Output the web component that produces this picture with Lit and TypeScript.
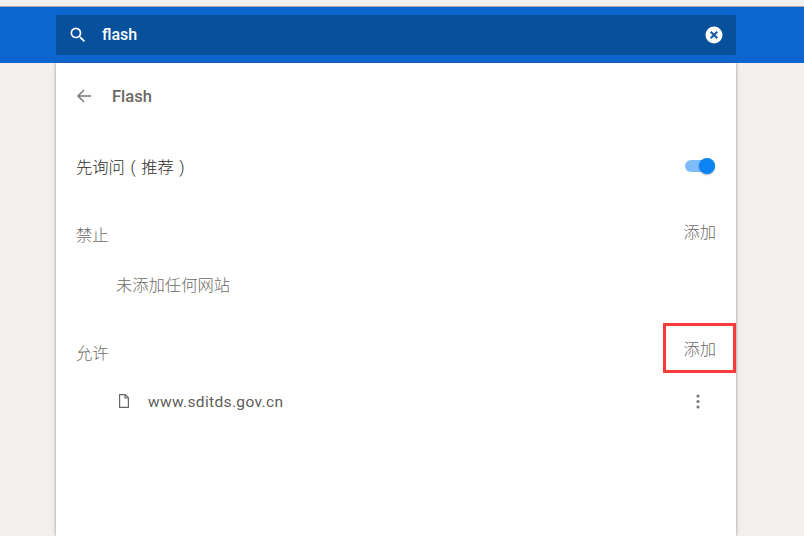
import { LitElement, html, css } from "lit";
import { customElement } from "lit/decorators.js";

@customElement("app-root")
export class AppRoot extends LitElement {
  static styles = css`
    :host {
      display: block;
      height: 536px;
      overflow: hidden;
      position: relative;
      background: #f1f0ee;
      font-family: Roboto, "Noto Sans CJK SC", sans-serif;
      color: #6d6b66;
      font-size: 16.3px;
      font-weight: 300;
    }
    .strip {
      height: 6px;
      border-bottom: 1px solid #a9a7a3;
    }
    .bar {
      height: 56px;
      background: #0d66d0;
      padding: 8px 68px 0 56px;
      box-sizing: border-box;
    }
    .search {
      height: 40px;
      background: #07509c;
      border-radius: 2px;
      display: flex;
      align-items: center;
      padding: 0 12px;
      color: #fff;
    }
    .search .q {
      flex: 1;
      margin: 0 0 2px 14px;
      font-size: 16px;
      font-weight: 500;
    }
    .card {
      margin: 0 68px 0 56px;
      height: 473px;
      background: #fff;
      box-shadow: 0 0 3px rgba(60, 60, 60, 0.55);
      padding: 0 20px;
      box-sizing: border-box;
    }
    .back {
      height: 66px;
      display: flex;
      align-items: center;
      gap: 20px;
      font-size: 16.5px;
      font-weight: 500;
      color: #6a6863;
    }
    .toggle-row {
      height: 48px;
      margin-top: 13px;
      display: flex;
      align-items: center;
      justify-content: space-between;
      color: #2e2c29;
    }
    .paren {
      display: inline-block;
      width: 1em;
      text-align: center;
    }
    .toggle {
      width: 30px;
      height: 12px;
      margin-right: 1px;
      border-radius: 6px;
      background: #7fbcfb;
      position: relative;
    }
    .knob {
      position: absolute;
      right: 0;
      top: -2px;
      width: 16px;
      height: 16px;
      border-radius: 50%;
      background: #0a84f5;
      box-shadow: 0 1px 2px rgba(0, 0, 0, 0.3);
    }
    .head {
      display: flex;
      justify-content: space-between;
      height: 44px;
      line-height: 24px;
    }
    .head .add {
      margin-top: -3px;
    }
    .blocked {
      margin-top: 34px;
    }
    .allowed {
      margin-top: 38px;
    }
    .allowed .add {
      margin-top: -4px;
    }
    .empty {
      height: 36px;
      line-height: 36px;
      margin-left: 40px;
    }
    .site {
      display: flex;
      align-items: center;
      height: 30px;
      padding-left: 40px;
      color: #5f5d59;
      font-size: 15.5px;
      font-weight: 400;
      letter-spacing: 0.35px;
    }
    .site .url {
      flex: 1;
      margin: 1px 0 0 16px;
    }
    .more {
      margin-right: 16px;
    }
    svg {
      display: block;
    }
    .mark {
      position: absolute;
      left: 663px;
      top: 323px;
      width: 73px;
      height: 50px;
      border: 3px solid #f83c3c;
      box-sizing: border-box;
    }
  `;

  render() {
    return html`
      <div class="strip"></div>
      <div class="bar">
        <div class="search">
          <svg width="20" height="20" viewBox="0 0 24 24" fill="#fff">
            <path d="M15.5 14h-.79l-.28-.27A6.47 6.47 0 0 0 16 9.5 6.5 6.5 0 1 0 9.5 16c1.61 0 3.09-.59 4.23-1.57l.27.28v.79l5 4.99L20.49 19l-4.99-5zm-6 0C7.01 14 5 11.99 5 9.5S7.01 5 9.5 5 14 7.01 14 9.5 11.99 14 9.5 14z"/>
          </svg>
          <span class="q">flash</span>
          <svg width="20" height="20" viewBox="0 0 20 20">
            <circle cx="10" cy="10" r="8.5" fill="#fff"/>
            <path d="M6.7 6.7l6.6 6.6M13.3 6.7l-6.6 6.6" stroke="#1f5fa6" stroke-width="2.2"/>
          </svg>
        </div>
      </div>
      <div class="card">
        <div class="back">
          <svg width="16" height="16" viewBox="0 0 16 16" fill="none" stroke="#7c7a75" stroke-width="1.5">
            <path d="M15 8H2M8 2L2 8l6 6"/>
          </svg>
          <span>Flash</span>
        </div>
        <div class="toggle-row">
          <span>先询问<span class="paren">(</span>推荐<span class="paren">)</span></span>
          <div class="toggle"><div class="knob"></div></div>
        </div>
        <div class="head blocked"><span>禁止</span><span class="add">添加</span></div>
        <div class="empty">未添加任何网站</div>
        <div class="head allowed"><span>允许</span><span class="add">添加</span></div>
        <div class="site">
          <svg width="16" height="16" viewBox="0 0 16 16" fill="none" stroke="#6a6864" stroke-width="1.2">
            <path d="M3.6 1.6h5.6l3.2 3.2v9.6H3.6zM9 1.6v3.4h3.4"/>
          </svg>
          <span class="url">www.sditds.gov.cn</span>
          <svg class="more" width="4" height="15" viewBox="0 0 4 15" fill="#7c7a75">
            <circle cx="2" cy="2" r="1.6"/><circle cx="2" cy="7.5" r="1.6"/><circle cx="2" cy="13" r="1.6"/>
          </svg>
        </div>
      </div>
      <div class="mark"></div>
    `;
  }
}
